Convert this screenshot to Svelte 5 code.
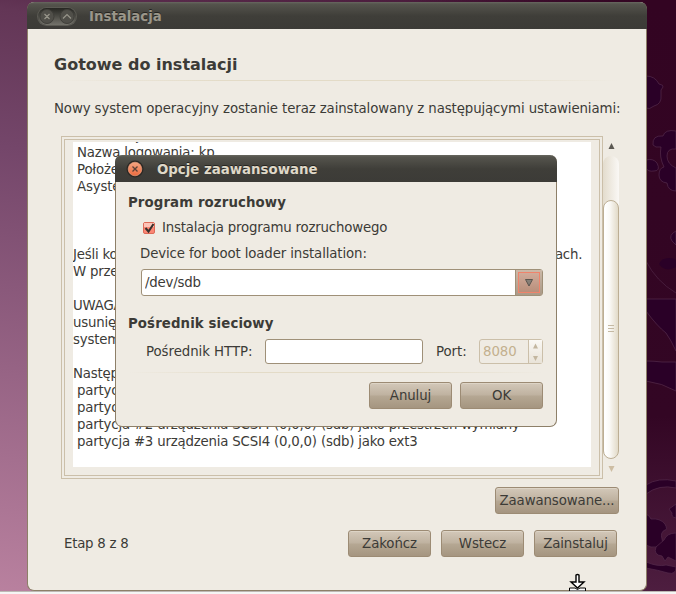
<script>
  let bootloader = $state(true);
  let device = $state('/dev/sdb');
  let proxy = $state('');

  const summary = [
    ' Lokalizacja: Warszawa',
    ' Nazwa logowania: kp',
    ' Położenie: Europe/Warsaw',
    ' Asystent migracji:',
    '',
    '',
    '',
    'Jeśli kontynuujesz,  wymienione poniżej zmiany  zostaną zapisane na dyskach.',
    'W przeciwnym przypadku możliwe będą dalsze zmiany.',
    '',
    'UWAGA: Spowoduje to zniszczenie danych na',
    'usuniętych partycjach oraz na partycjach z nowym',
    'systemem plików.',
    '',
    'Następujące partycje zostaną sformatowane:',
    ' partycja #1 urządzenia SCSI1 (0,0,0) (sda) jako ext4',
    ' partycja #1 urządzenia SCSI4 (0,0,0) (sdb) jako ext4',
    ' partycja #2 urządzenia SCSI4 (0,0,0) (sdb) jako przestrzeń wymiany',
    ' partycja #3 urządzenia SCSI4 (0,0,0) (sdb) jako ext3'
  ];
</script>

<div class="desktop">
  <svg class="wallpaper" width="36" height="594" viewBox="640 0 36 594">
    <g class="petal">
      <path d="M646 76q9 0 13 8q5 1 4 3q-3 2-2 8q1 9-7 11q-5 4-8 2z" />
      <path d="M653 145q-1-10 10-9q2-7 13-5v18q-9-1-9 7q0 8 9 12v23q-8 0-9-8q-8-1-8-8q0-7 5-8q-5-10-3-20q-6 1-8-2z" />
      <path d="M646 160q7-2 11 3q4 8-3 8q-6 1-8-3z" />
      <path d="M676 231q-8 4-4 10l4 4z" />
      <path class="dim" d="M659 264q2-6 10-6q7 0 7 3v6q-11 6-17-3z" />
      <path d="M646 311q11 15 20 22q5 7 10 18v-52h-30z" />
      <path d="M646 361q8 0 16 1h14v29q-14-8-30-10z" />
      <path d="M646 485q12-8 30-4v7q-17-4-30 6z" />
      <path d="M646 514q4 2 5 5q9-1 14 5q3 6 0 6q-5 2-3 9q3 8-6 8q-5 1-10-2z" />
      <path d="M676 504l-7 5l3 4q-1 4 4 5z" />
      <path d="M676 533q-9 0-12 7l-8 7q-3 8 6 9l3 5l3-4l8 4z" />
      <path d="M646 562q12 5 20 3l10 2q0 8-8 6q-10-3-22-5z" />
    </g>
    <path class="line-art" d="M646 261q10 20 30 32" />
  </svg>

  <section class="window main">
    <header class="titlebar">
      <div class="controls">
        <svg width="40" height="20" viewBox="0 0 40 20">
          <circle cx="11" cy="9.5" r="7" />
          <circle cx="31" cy="9.5" r="7" />
          <path d="M8.5 7l5 5M13.5 7l-5 5M27 11.5l4-4l4 4" />
        </svg>
      </div>
      <span class="title">Instalacja</span>
    </header>
    <div class="content">
      <h1>Gotowe do instalacji</h1>
      <hr />
      <p class="intro">Nowy system operacyjny zostanie teraz zainstalowany z następującymi ustawieniami:</p>
      <div class="scroller">
        <div class="frame">
          <div class="frame-inner">
            <div class="summary">
              {#each summary as line}
                <div class="line">{line}</div>
              {/each}
            </div>
          </div>
        </div>
        <div class="scrollbar">
          <svg width="16" height="20"><path d="M8.5 7l3 6h-6z" fill="#5b5852" /></svg>
          <div class="trough">
            <div class="thumb"><i></i><i></i><i></i></div>
          </div>
          <svg width="16" height="20"><path d="M8.5 13l3-6h-6z" fill="#cdbda3" /></svg>
        </div>
      </div>
      <div class="advanced">
        <button class="wide">Zaawansowane...</button>
      </div>
      <footer>
        <span class="step">Etap 8 z 8</span>
        <button>Zakończ</button>
        <button>Wstecz</button>
        <button>Zainstaluj</button>
      </footer>
    </div>
  </section>

  <section class="window dialog">
    <header class="titlebar active">
      <svg class="close" width="20" height="20" viewBox="0 0 20 20">
        <defs>
          <linearGradient id="orange" x1="0" y1="0" x2="0" y2="1">
            <stop offset="0" stop-color="#f5a582" />
            <stop offset="1" stop-color="#ec6b3f" />
          </linearGradient>
        </defs>
        <circle cx="10" cy="10" r="8.5" fill="#2b2723" />
        <circle cx="10" cy="10" r="6.8" fill="url(#orange)" stroke="#f9a987" stroke-width="0.6" />
        <path d="M7.5 7.5l5 5M12.5 7.5l-5 5" stroke="#5a4238" stroke-width="1.3" />
      </svg>
      <span class="title">Opcje zaawansowane</span>
    </header>
    <div class="options">
      <h2>Program rozruchowy</h2>
      <label class="check">
        <input type="checkbox" bind:checked={bootloader} />
        <svg width="14" height="14" viewBox="0 0 14 14">
          <rect x="1.5" y="1.5" width="11" height="11" rx="1.5" fill="#fb8674" stroke="#dd6a58" />
          <rect x="2" y="2" width="10" height="4" fill="#fdc3b7" />
          {#if bootloader}
            <path d="M3.5 7l3 3.5l5-7.500" fill="none" stroke="#35302c" stroke-width="2" />
          {/if}
        </svg>
        <span>Instalacja programu rozruchowego</span>
      </label>
      <div class="device">Device for boot loader installation:</div>
      <div class="combo">
        <input type="text" bind:value={device} />
        <div class="drop">
          <span><svg width="20" height="19"><path d="M6.5 6.500h7l-3.500 6.500z" fill="#857e76" stroke="#5b554e" stroke-width="1" /></svg></span>
        </div>
      </div>
      <h2 class="network">Pośrednik sieciowy</h2>
      <div class="proxy">
        <span class="http">Pośrednik HTTP:</span>
        <input class="entry" type="text" bind:value={proxy} />
        <span class="port">Port:</span>
        <div class="spin">
          <span>8080</span>
          <svg width="13" height="23"><path d="M6.5 3.5l2.500 5h-5zM6.5 21l2.500-5h-5z" fill="#c3b69f" /></svg>
        </div>
      </div>
      <hr />
      <div class="actions">
        <button>Anuluj</button>
        <button>OK</button>
      </div>
    </div>
  </section>

  <svg class="cursor" width="20" height="18" viewBox="0 0 20 18">
    <path d="M8 2q1.500-1 3 0v7h5l-6.500 6l-6.500-6h5z" fill="#fff" stroke="#000" stroke-width="1.4" />
    <path d="M1.500 18v-3h5.500l2.500 1.500l2.500-1.500h5.500v3z" fill="#fff" stroke="#000" />
  </svg>
  <div class="edge"></div>
</div>

<style>
  :global(body) {
    margin: 0;
    overflow: hidden;
  }

  .desktop {
    position: relative;
    width: 676px;
    height: 594px;
    overflow: hidden;
    font-family: 'DejaVu Sans', sans-serif;
    font-size: 13.33px;
    line-height: 17px;
    color: #3c3b37;
    background:
      linear-gradient(90deg, transparent 60%, #330522 95%),
      linear-gradient(8deg, #b9819f 0%, #74466a 65%, #633656 85%, #3d0d2e 100%);
  }

  .wallpaper {
    position: absolute;
    right: 0;
    top: 0;
    background: linear-gradient(#330422, #330624 70%, #4e1e40);
  }

  .petal {
    fill: #2a0027;
    stroke: #542b4c;
    stroke-width: 0.7;
  }

  .dim {
    stroke: none;
  }

  .line-art {
    fill: none;
    stroke: #542b4c;
    stroke-width: 0.6;
  }

  .window {
    position: absolute;
    box-sizing: border-box;
    background: #efebe3;
    border: 1px solid #8d7f68;
    border-top: 0;
    border-radius: 7px;
  }

  .main {
    left: 27px;
    top: 2px;
    width: 620px;
    height: 589px;
  }

  .dialog {
    left: 115px;
    top: 155px;
    width: 442px;
    height: 272px;
  }

  .titlebar {
    display: flex;
    align-items: center;
    height: 27px;
    margin: 0 -1px;
    border-radius: 7px 7px 0 0;
    background: linear-gradient(#686860 0, #55544d 2px, #3f3e39 14px, #3c3b37);
    color: #9a968a;
  }

  .active {
    color: #dfd8c8;
  }

  .title {
    padding-top: 2px;
    font-weight: bold;
    text-shadow: 0 -1px #25241f;
  }

  .controls {
    width: 38px;
    height: 17px;
    margin: 1px 13px 0 11px;
    border-radius: 9px;
    background: linear-gradient(#262622, #74736b);
    box-shadow: 0 0 0 1px #5b5a53;
  }

  .controls svg {
    display: block;
    margin: -1px 0 0 -2px;
  }

  .controls circle {
    fill: #504f49;
    stroke: #403f3a;
  }

  .controls path {
    fill: none;
    stroke: #98968b;
    stroke-width: 1.2;
  }

  .close {
    margin: 1px 12px 0 10px;
  }

  .content {
    padding: 26px 27px 0 26px;
  }

  h1 {
    margin: 0;
    font-size: 16px;
    line-height: 20px;
  }

  hr {
    height: 1px;
    margin: 5px 0 0;
    border: 0;
    background: linear-gradient(90deg, transparent, #e3dbc7 30%, #e3dbc7 70%, transparent);
  }

  .intro {
    margin: 19px 0 0;
    letter-spacing: -0.11px;
    white-space: nowrap;
  }

  .scroller {
    display: flex;
    margin: 19px 0 0 7px;
  }

  .frame {
    box-sizing: border-box;
    flex: none;
    width: 542px;
    height: 343px;
    padding: 2px;
    border: 1px solid #cbbfa9;
  }

  .frame-inner {
    box-sizing: border-box;
    height: 337px;
    padding: 2px 8px 8px;
    border: 1px solid #cbbfa9;
  }

  .summary {
    height: 325px;
    overflow: hidden;
    background: #fff;
    letter-spacing: -0.2px;
  }

  .line {
    height: 17px;
    white-space: pre;
  }

  .line:first-child {
    margin-top: -15px;
  }

  .scrollbar {
    flex: none;
    width: 16px;
  }

  .scrollbar svg {
    display: block;
  }

  .trough {
    height: 303px;
    box-sizing: border-box;
    padding-top: 44px;
    border-radius: 8px;
    background: linear-gradient(90deg, #e3dccd, #faf8f5);
  }

  .thumb {
    box-sizing: border-box;
    height: 259px;
    padding-top: 124px;
    border: 1px solid #bcae94;
    border-radius: 8px;
    background: linear-gradient(90deg, #fff 10%, #faf9f6 40%, #e2dac8);
  }

  .thumb i {
    display: block;
    width: 6px;
    height: 1px;
    margin: 0 auto 2px;
    background: #c5b9a3;
  }

  .advanced {
    display: flex;
    justify-content: flex-end;
    margin-top: 8px;
  }

  button {
    width: 83px;
    height: 27px;
    padding: 0;
    border: 1px solid #9c8b74;
    border-radius: 3px;
    background: linear-gradient(#d3c8b9, #bfb2a0 48%, #b5a793 52%, #a59580);
    box-shadow: inset 0 1px #ddd4c6;
    font: inherit;
    letter-spacing: -0.1px;
    color: #3c3b37;
  }

  .wide {
    width: 124px;
  }

  footer {
    display: flex;
    gap: 10px;
    align-items: center;
    margin: 16px 2px 0 10px;
  }

  .step {
    flex: 1;
    letter-spacing: -0.25px;
  }

  .options {
    padding: 12px 13px 0 12px;
  }

  h2 {
    margin: 0;
    font-size: 13.33px;
    line-height: 17px;
    letter-spacing: 0.1px;
  }

  .check {
    display: flex;
    align-items: center;
    gap: 6px;
    margin: 8px 0 0 14px;
    letter-spacing: -0.2px;
  }

  .check input {
    display: none;
  }

  .device {
    margin: 9px 0 0 12px;
    letter-spacing: -0.12px;
  }

  .combo {
    display: flex;
    box-sizing: border-box;
    height: 27px;
    margin: 7px 0 0 13px;
    border: 1px solid #9f9078;
    border-radius: 3px;
    background: #fff;
  }

  input {
    flex: 1;
    min-width: 0;
    padding: 0 3px;
    border: 0;
    background: transparent;
    font: inherit;
    letter-spacing: -0.2px;
    color: inherit;
    outline: none;
  }

  .drop {
    width: 27px;
    padding: 2px;
    box-sizing: border-box;
    border-left: 1px solid #9f9078;
    background: linear-gradient(#ccb9a8, #ab9a87);
  }

  .drop span {
    display: block;
    box-sizing: border-box;
    height: 21px;
    border: 1px solid #f0836b;
    background: linear-gradient(#d0ab9a, #b98f7b);
  }

  .network {
    margin-top: 19px;
  }

  .proxy {
    display: flex;
    align-items: center;
    margin: 7px 0 0 18px;
    letter-spacing: -0.05px;
  }

  .http {
    width: 119px;
  }

  .entry {
    flex: none;
    box-sizing: border-box;
    width: 158px;
    height: 25px;
    border: 1px solid #9f9078;
    border-radius: 3px;
    background: #fff;
  }

  .port {
    width: 43px;
    margin-left: 13px;
  }

  .spin {
    display: flex;
    box-sizing: border-box;
    width: 64px;
    height: 25px;
    border: 1px solid #cbbfa9;
    border-radius: 3px;
    color: #c3b08e;
    line-height: 23px;
  }

  .spin span {
    width: 45px;
    padding-left: 3px;
    border-right: 1px solid #cbbfa9;
  }

  .spin svg {
    background: linear-gradient(#faf8f4, #e9e3d8);
  }

  .options hr {
    margin-top: 8px;
  }

  .actions {
    display: flex;
    justify-content: flex-end;
    gap: 8px;
    margin-top: 9px;
  }

  .cursor {
    position: absolute;
    left: 568px;
    top: 573px;
  }

  .edge {
    position: absolute;
    left: 0;
    right: 0;
    bottom: 0;
    height: 2px;
    border-top: 1px solid #bdb8b4;
    background: #f5f5f4;
  }
</style>
